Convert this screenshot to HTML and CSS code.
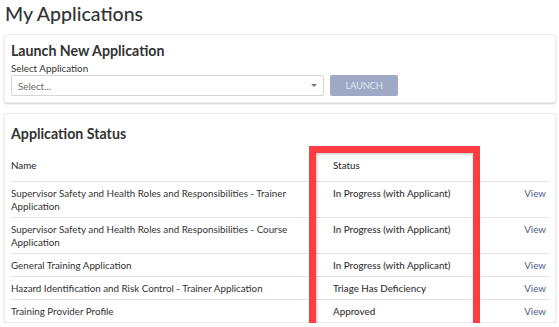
FILE: index.html
```html
<!DOCTYPE html>
<html lang="en">
<head>
  <meta charset="UTF-8" />
  <meta name="viewport" content="width=device-width, initial-scale=1" />
  <title>My Applications</title>
  <link rel="stylesheet" href="styles.css">
</head>
<body>
  <div class="page">
    <h1>My Applications</h1>

    <div class="card launch-card">
      <h2>Launch New Application</h2>
      <label for="appSelect">Select Application</label>
      <div class="launch-row">
        <div class="select-box" id="appSelect">
          <span>Select...</span>
          <span class="caret"></span>
        </div>
        <button type="button" disabled>LAUNCH</button>
      </div>
    </div>

    <div class="card status-card">
      <h2>Application Status</h2>
      <table class="status-table">
        <thead>
          <tr>
            <th class="col-name">Name</th>
            <th class="col-status">Status</th>
            <th class="col-action"></th>
          </tr>
        </thead>
        <tbody>
          <tr>
            <td>Supervisor Safety and Health Roles and Responsibilities - Trainer Application</td>
            <td class="status">In Progress (with Applicant)</td>
            <td class="action"><a href="#">View</a></td>
          </tr>
          <tr>
            <td>Supervisor Safety and Health Roles and Responsibilities - Course Application</td>
            <td class="status">In Progress (with Applicant)</td>
            <td class="action"><a href="#">View</a></td>
          </tr>
          <tr>
            <td>General Training Application</td>
            <td class="status">In Progress (with Applicant)</td>
            <td class="action"><a href="#">View</a></td>
          </tr>
          <tr>
            <td>Hazard Identification and Risk Control - Trainer Application</td>
            <td class="status">Triage Has Deficiency</td>
            <td class="action"><a href="#">View</a></td>
          </tr>
          <tr>
            <td>Training Provider Profile</td>
            <td class="status">Approved</td>
            <td class="action"><a href="#">View</a></td>
          </tr>
        </tbody>
      </table>
    </div>

    <div class="highlight"></div>
  </div>
</body>
</html>
```

FILE: styles.css
```css
:root {
  --text-color: #333;
  --border-color: #e3e3e3;
  --link-color: #4b5a8a;
  --button-color: #9ea9c5;
  --mark-color: #fd3d42;
}

body {
  margin: 0;
  font-family: 'Lato', 'Open Sans', sans-serif;
  color: var(--text-color);
  background-color: #fff;
}

.page {
  position: relative;
  padding: 0 3px 0 4px;
}

h1 {
  margin: 0 0 6px 1px;
  font-size: 19.5px;
  font-weight: 500;
  line-height: 28px;
}

.card {
  background-color: #fff;
  border: 1px solid #ececec;
  border-radius: 3px;
  box-shadow: 0 1px 2px rgba(0, 0, 0, 0.18);
  padding: 6px 6px 6px 6px;
}

.card h2 {
  margin: 0;
  font-size: 14.2px;
  font-weight: 700;
  line-height: 20px;
}

.launch-card label {
  display: block;
  font-size: 9.8px;
  line-height: 14px;
}

.launch-row {
  display: flex;
  align-items: center;
  gap: 6px;
}

.select-box {
  width: 313px;
  height: 21px;
  box-sizing: border-box;
  border: 1px solid #d6d6d6;
  border-radius: 2px;
  display: flex;
  align-items: center;
  justify-content: space-between;
  padding: 0 6px;
  font-size: 9.8px;
  color: #666;
}

.caret {
  width: 0;
  height: 0;
  border-left: 3px solid transparent;
  border-right: 3px solid transparent;
  border-top: 3px solid #777;
}

button {
  width: 68px;
  height: 21px;
  border: none;
  border-radius: 2px;
  background-color: var(--button-color);
  color: #dfe4ee;
  font-family: inherit;
  font-size: 9.5px;
  letter-spacing: -0.3px;
}

.status-card {
  margin-top: 10px;
  padding-top: 10px;
  padding-bottom: 0;
}

.status-table {
  width: 100%;
  margin-top: 6px;
  border-collapse: collapse;
  font-size: 9.8px;
  line-height: 13px;
}

.status-table th,
.status-table td {
  text-align: left;
  vertical-align: top;
  padding: 5px 0 4px 0;
  border-bottom: 1px solid var(--border-color);
}

.status-table th {
  font-weight: 500;
  padding-top: 9px;
  padding-bottom: 9px;
}

.status-table tbody tr:last-child td {
  border-bottom: none;
}

.col-name {
  width: 317px;
}

.status-table th.col-status,
.status-table td.status {
  padding-left: 5px;
  font-weight: 500;
}

.status-table .action {
  text-align: right;
  padding-right: 3px;
}

.action a {
  color: var(--link-color);
  text-decoration: none;
}

.highlight {
  position: absolute;
  left: 309px;
  top: 146px;
  width: 157px;
  height: 180px;
  border: 7px solid var(--mark-color);
  box-shadow: inset 1px 1px 3px rgba(0, 0, 0, 0.25);
}
```
